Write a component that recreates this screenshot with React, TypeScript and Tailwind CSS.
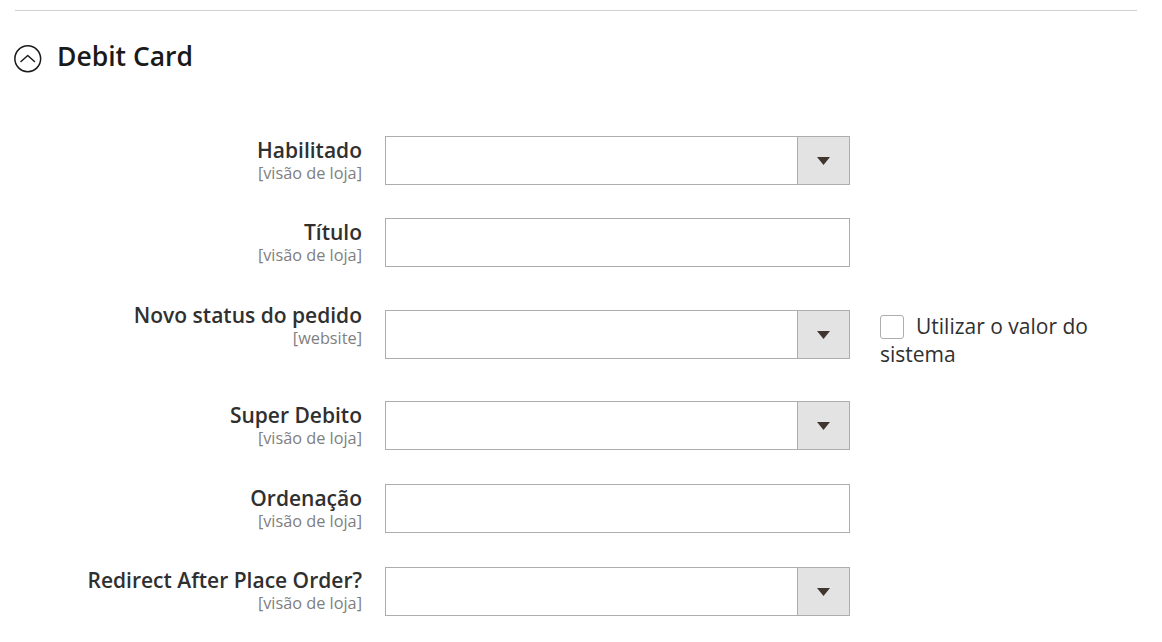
import React from 'react'

type Field = {
  label: string
  scope: string
  kind: 'select' | 'text'
  row: string
  box: string
  useDefault?: boolean
}

const FIELDS: Field[] = [
  { label: 'Habilitado', scope: '[visão de loja]', kind: 'select', row: 'h-[82px]', box: 'mt-0' },
  { label: 'Título', scope: '[visão de loja]', kind: 'text', row: 'h-[83px]', box: 'mt-0' },
  {
    label: 'Novo status do pedido',
    scope: '[website]',
    kind: 'select',
    row: 'h-[100px]',
    box: 'mt-[9px]',
    useDefault: true,
  },
  { label: 'Super Debito', scope: '[visão de loja]', kind: 'select', row: 'h-[83px]', box: 'mt-0' },
  { label: 'Ordenação', scope: '[visão de loja]', kind: 'text', row: 'h-[82px]', box: 'mt-0' },
  { label: 'Redirect After Place Order?', scope: '[visão de loja]', kind: 'select', row: 'h-[76px]', box: 'mt-px' },
]

function CollapseIcon() {
  return (
    <svg width="28" height="28" viewBox="0 0 28 28" className="shrink-0 text-[#1a1a1a]">
      <circle cx="13.75" cy="13.75" r="12.9" fill="none" stroke="currentColor" strokeWidth="1.5" />
      <path
        d="M7 16.5 L13.75 10.5 L20.5 16.5"
        fill="none"
        stroke="currentColor"
        strokeWidth="1.5"
        strokeLinecap="round"
        strokeLinejoin="round"
      />
    </svg>
  )
}

function SelectBox() {
  return (
    <div className="w-[465px] h-[49px] border border-[#adadad] bg-white flex">
      <div className="flex-1" />
      <div className="w-[52px] h-full bg-[#e3e3e3] border-l border-[#adadad] flex items-center justify-center">
        <svg width="13" height="8" viewBox="0 0 13 8">
          <path d="M0 0 H13 L6.5 8 Z" fill="#41362f" />
        </svg>
      </div>
    </div>
  )
}

function TextBox() {
  return <div className="w-[465px] h-[49px] border border-[#adadad] bg-white" />
}

export default function App() {
  return (
    <div className="w-[1162px] h-[642px] overflow-hidden bg-white font-['Open_Sans',sans-serif] text-[#303030]">
      <div className="pt-[10px] pl-[15px]">
        <div className="w-[1122px] border-t border-[#d1d1d1]" />
      </div>

      <div className="mt-[34px] pl-[14px] flex items-start gap-[15px]">
        <CollapseIcon />
        <h2 className="-mt-[4px] text-[26.5px] leading-[30px] font-semibold text-[#1a1a1a]">
          Debit Card
        </h2>
      </div>

      <div className="mt-[63px] pl-[15px]">
        {FIELDS.map((f) => (
          <div key={f.label} className={`flex items-start ${f.row}`}>
            <div className="w-[347px] text-right">
              <div className="text-[21px] leading-[28px] font-semibold text-[#303030]">
                {f.label}
              </div>
              <div className="text-[16.3px] leading-[18px] text-[#808080]">{f.scope}</div>
            </div>
            <div className={`ml-[23px] ${f.box}`}>
              {f.kind === 'select' ? <SelectBox /> : <TextBox />}
            </div>
            {f.useDefault && (
              <div className="ml-[30px] mt-[11px] w-[257px] text-[21px] leading-[28px] text-[#303030]">
                <span className="inline-block align-[-5px] w-[24px] h-[24px] mr-[12px] rounded-[3px] border border-[#adadad] bg-white" />
                Utilizar o valor do sistema
              </div>
            )}
          </div>
        ))}
      </div>
    </div>
  )
}
